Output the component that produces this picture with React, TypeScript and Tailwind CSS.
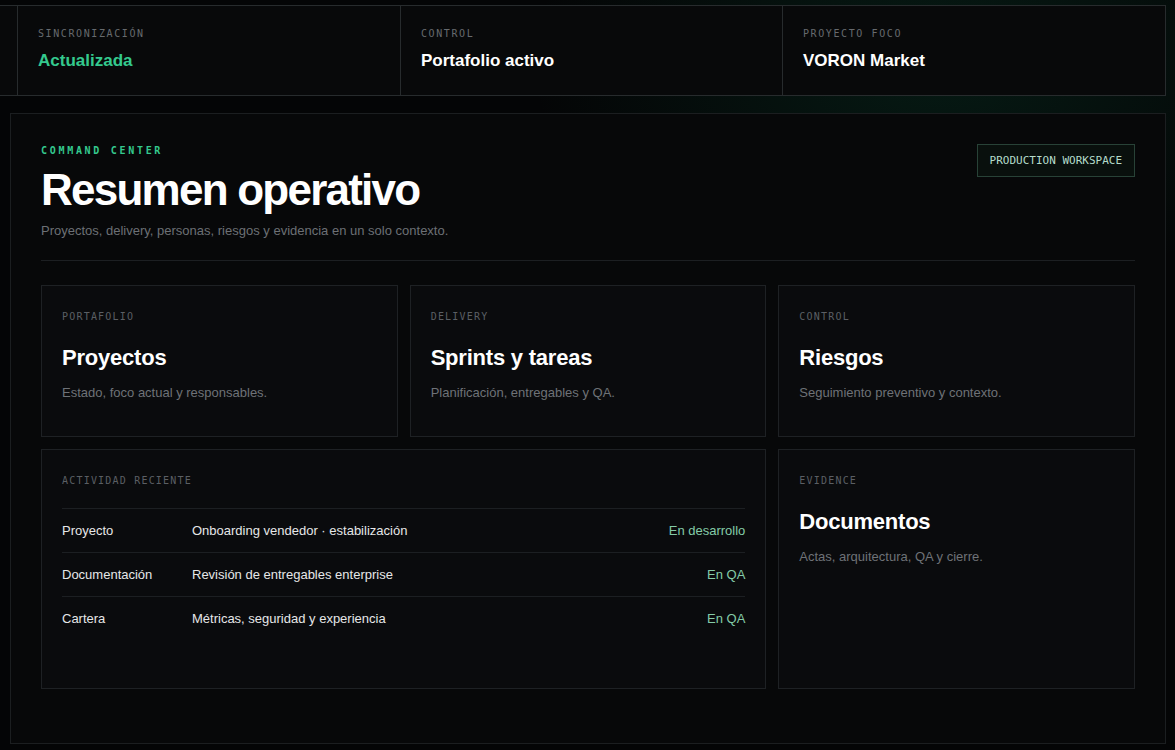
import { ReactNode } from "react";

// ---------------------------------------------------------------------------
// Data
// ---------------------------------------------------------------------------

const statusCells = [
  { label: "SINCRONIZACIÓN", value: "Actualizada", accent: true, width: "w-[383px]" },
  { label: "CONTROL", value: "Portafolio activo", accent: false, width: "w-[382px]" },
  { label: "PROYECTO FOCO", value: "VORON Market", accent: false, width: "w-[383px]" },
];

const modules = [
  { label: "PORTAFOLIO", title: "Proyectos", desc: "Estado, foco actual y responsables." },
  { label: "DELIVERY", title: "Sprints y tareas", desc: "Planificación, entregables y QA." },
  { label: "CONTROL", title: "Riesgos", desc: "Seguimiento preventivo y contexto." },
];

const activity = [
  { area: "Proyecto", detail: "Onboarding vendedor · estabilización", status: "En desarrollo" },
  { area: "Documentación", detail: "Revisión de entregables enterprise", status: "En QA" },
  { area: "Cartera", detail: "Métricas, seguridad y experiencia", status: "En QA" },
];

const sans = "font-['Liberation_Sans',Arial,sans-serif]";
const mono = "font-['DejaVu_Sans_Mono','Liberation_Mono',monospace]";

// ---------------------------------------------------------------------------
// Pieces
// ---------------------------------------------------------------------------

function Eyebrow({ children }: { children: ReactNode }) {
  return (
    <div className={`${mono} text-[10px] leading-[12px] tracking-[0.12em] text-[#5b5f64]`}>
      {children}
    </div>
  );
}

function ModuleCard({ label, title, desc }: { label: string; title: string; desc: string }) {
  return (
    <div className="h-[152px] border border-[#1e2124] bg-[#0a0b0d] px-5 pt-[25px]">
      <Eyebrow>{label}</Eyebrow>
      <h3 className="mt-[21px] text-[22px] leading-[28px] font-bold tracking-[-0.01em] text-white">
        {title}
      </h3>
      <p className="mt-[11px] text-[13px] leading-5 text-[#6e7277]">{desc}</p>
    </div>
  );
}

// ---------------------------------------------------------------------------
// Page
// ---------------------------------------------------------------------------

export default function App() {
  return (
    <div
      className={`${sans} min-h-[750px] w-full overflow-hidden bg-[#040506] bg-[radial-gradient(ellipse_50%_45%_at_80%_8%,rgba(16,150,100,0.15),transparent_70%)] pt-[5px] pr-[9px] pl-[10px] text-white`}
    >
      <div className="-ml-[10px] flex justify-end overflow-hidden border-y border-[#272b2d]">
        <div aria-hidden="true" className="w-[383px] shrink-0 border-r border-[#272b2d] bg-[#08090a]" />
        {statusCells.map((c) => (
          <div
            key={c.label}
            className={`${c.width} shrink-0 border-r border-[#272b2d] bg-[#08090a] px-5 pt-[22px] pb-[23px]`}
          >
            <div className={`${mono} text-[10px] leading-[12px] tracking-[0.16em] text-[#666a6e]`}>
              {c.label}
            </div>
            <div
              className={`mt-[10px] text-[17px] leading-[22px] font-bold ${
                c.accent ? "text-[#34c98e]" : "text-white"
              }`}
            >
              {c.value}
            </div>
          </div>
        ))}
      </div>

      {/* Main panel */}
      <section className="mt-[17px] border border-[#1b1e20] bg-[#070809] px-[30px] pt-[30px] pb-[54px]">
        <header className="flex items-start justify-between border-b border-[#1c1f22] pb-[19px]">
          <div>
            <div className={`${mono} pt-px text-[10px] leading-[12px] font-bold tracking-[0.27em] text-[#34c98e]`}>
              COMMAND CENTER
            </div>
            <h1 className="mt-[11px] text-[44px] leading-[44px] font-bold tracking-[-0.04em] text-white">
              Resumen operativo
            </h1>
            <p className="mt-[9px] text-[13px] leading-5 text-[#6c7075]">
              Proyectos, delivery, personas, riesgos y evidencia en un solo contexto.
            </p>
          </div>
          <span
            className={`${mono} border border-[#284237] bg-[#09100d] px-3 py-[9px] text-[11px] leading-[13px] text-[#b4dccb]`}
          >
            PRODUCTION WORKSPACE
          </span>
        </header>

        <div className="mt-6 grid grid-cols-3 gap-3">
          {modules.map((m) => (
            <ModuleCard key={m.title} {...m} />
          ))}

          {/* Recent activity */}
          <div className="col-span-2 min-h-[240px] border border-[#1e2124] bg-[#0a0b0d] px-5 pt-[25px]">
            <Eyebrow>ACTIVIDAD RECIENTE</Eyebrow>
            <div className="mt-[21px]">
              {activity.map((row) => (
                <div
                  key={row.area}
                  className="flex h-[44px] items-center border-t border-[#1c1f22] text-[13px]"
                >
                  <span className="w-[130px] shrink-0 text-[#e6e7e8]">{row.area}</span>
                  <span className="flex-1 text-[#e6e7e8]">{row.detail}</span>
                  <span className="text-[#84cba8]">{row.status}</span>
                </div>
              ))}
            </div>
          </div>

          <div className="min-h-[240px] border border-[#1e2124] bg-[#0a0b0d] px-5 pt-[25px]">
            <Eyebrow>EVIDENCE</Eyebrow>
            <h3 className="mt-[21px] text-[22px] leading-[28px] font-bold tracking-[-0.01em] text-white">
              Documentos
            </h3>
            <p className="mt-[11px] text-[13px] leading-5 text-[#6e7277]">
              Actas, arquitectura, QA y cierre.
            </p>
          </div>
        </div>
      </section>
    </div>
  );
}
